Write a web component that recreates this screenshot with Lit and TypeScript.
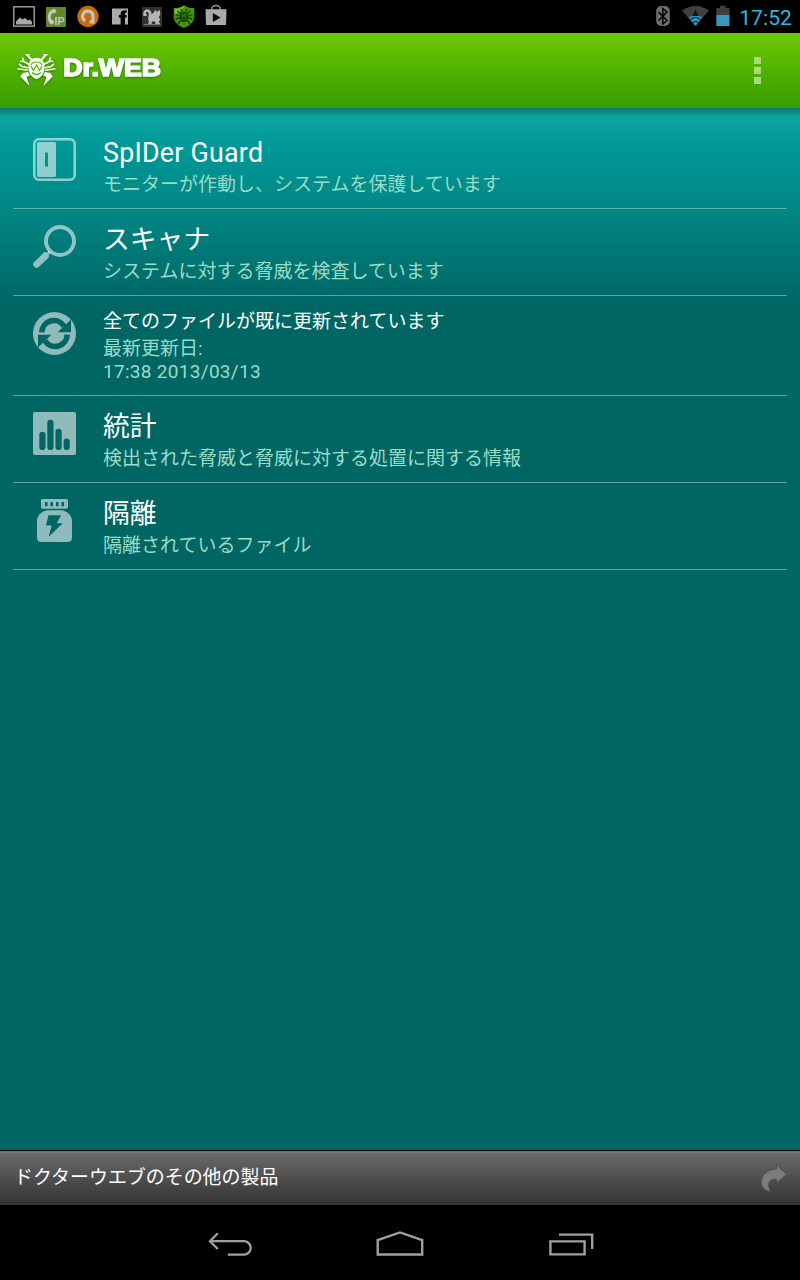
import { LitElement, html, css, svg } from "lit";
import { customElement } from "lit/decorators.js";

const statusIcons = [
  // gallery
  svg`<rect x="5.8" y="6.8" width="20.4" height="19.4" fill="none" stroke="#a0a0a0" stroke-width="1.4"/>
    <path d="M8 24.5V21.5L12 17.5L14.5 19.5L17 18L20 20.5L22 19.5L24 22V24.5Z" fill="#a8a8a8"/>`,
  // ip phone
  svg`<rect x="6" y="7" width="20" height="20" rx="1" fill="#62882a"/>
    <path d="M13.4 9.2C9 10.5 7.2 14.5 8 19C8.4 22 9.6 24.2 12 24.6L14.2 22.4L12.6 19.4L11.2 19.8C10.2 17 10.8 14.6 12.6 13L14.2 13.6L16.6 11.4L15 9Z" fill="#c4c8bd"/>
    <text x="14.6" y="25" class="ip" textLength="10" lengthAdjust="spacingAndGlyphs">IP</text>`,
  // avast
  svg`<circle cx="16" cy="16.5" r="10.7" fill="#c66b0b"/>
    <path d="M13.2 20.8A5.2 5.2 0 1 1 21 16.4V21.8H17.6" fill="none" stroke="#c9c2b8" stroke-width="3.2"/>`,
  // facebook
  svg`<path d="M8 8.5H24V24.5H20.9V17.6H22.6V15H20.9V13.8C20.9 12.9 21.3 12.7 22.6 12.7V10.2C18.4 9.8 16.6 11 16.6 13.8V15H14.8V17.6H16.6V24.5H8Z" fill="#ababab"/>`,
  // mascot
  svg`<rect x="6" y="7" width="20" height="20" fill="#303232"/>
    <path d="M7.3 16C6.8 11.5 9.2 9 12 9.4C14.6 9.8 15.8 12 15.6 14.5L18 12.2L19.2 9.7L20.7 11.8L23.8 10L24.4 14.6L22.8 17L24.2 19.5L22.5 22.8H24V24H19.5L19 21.5H15.7V24H12.2V22.7H13.2L12 19L13 15.5C13.2 12.7 12.3 11.5 10.6 12C9.3 12.6 9.8 14 11 14.3L10.5 16L8.8 16Z" fill="#b4b4b4"/>
    <path d="M8.6 12.5C9 10.3 12.5 9.8 13.8 12.6L13.6 16.5H16.5L18 19.2H22" fill="none" stroke="#b4b4b4" stroke-width="2"/>
    <path d="M8 24.5H24.5" stroke="#777" stroke-width="1"/>`,
  // shield
  svg`<path d="M16 5C13 7.5 9.5 8 5.7 8V17C6 22.5 10.5 25.8 16 28C21.5 25.8 26 22.5 26.3 17V8C22.5 8 19 7.5 16 5Z" fill="#449309"/>
    <path d="M16 6C13.5 8 10 9 6.7 9V15C10 12 15 10.5 16 6Z" fill="#83bd27"/>
    <g fill="none" stroke="#183d06" stroke-width="1.3"><ellipse cx="16" cy="17" rx="3.5" ry="4.5" fill="#286c08"/>
    <path d="M13 14L9.5 11M12 16L7.5 14.7M12 18L7.5 19M13 20L10 24M19 14L22.5 11M20 16L24.5 14.7M20 18L24.5 19M19 20L22 24M14 12L13 9M18 12L19 9M13 17L16 18.5L19 17M16 18.5V21"/></g>`,
  // store bag
  svg`<path d="M11.8 10V8.5A4.1 3 0 0 1 20.2 8.5V10" fill="none" stroke="#999" stroke-width="1.4"/>
    <path d="M5.5 9.3H26.5L26 25H6Z" fill="#a9a9a9"/><path d="M12.8 13L20.6 17.5L12.8 22Z" fill="#050505"/>`,
];

const guardIcon = svg`<rect x="1.3" y="1.3" width="40.4" height="40.4" rx="4.8" fill="none" stroke="currentColor" stroke-width="2.6"/>
  <path fill="currentColor" fill-rule="evenodd" d="M5.5 4H21.5Q23 4 23 5.5V37.5Q23 39 21.5 39H5.5Q4 39 4 37.5V5.5Q4 4 5.5 4ZM12 14.4V28.5H15V14.4Z"/>`;
const scanIcon = svg`<g fill="currentColor"><path fill-rule="evenodd" d="M27 0A16 16 0 1 1 26.99 0ZM27 3.9A12.1 12.1 0 1 0 27.01 3.9Z"/>
  <path d="M15.4 25.4L14.4 27.6L11.5 27L1 37.3Q-.6 39.4 1 41.6Q3.2 44 5.7 42L15.9 32.2L15.9 29.3L18.2 28Q16.6 27 15.4 25.4Z"/></g>`;
const updateIcon = svg`<defs><mask id="sync"><rect width="43" height="43" fill="#fff"/>
    <g fill="none" stroke="#000" stroke-width="5.6"><path d="M8.8 20.4A12 12 0 0 1 31 14.2"/><path d="M34.2 22.6A12 12 0 0 1 12 28.8"/></g>
    <path d="M38 7.5V20.2H24.6ZM5 35.5V22.8H18.4Z" fill="#000"/></mask></defs>
  <circle cx="21.5" cy="21.5" r="21.5" fill="currentColor" mask="url(#sync)"/>`;
const statsIcon = svg`<path fill="currentColor" fill-rule="evenodd" d="M2 0H41Q43 0 43 2V41Q43 43 41 43H2Q0 43 0 41V2Q0 0 2 0ZM6.3 22.8V35A3.1 3.1 0 0 0 12.5 35V22.8A3.1 3.1 0 0 0 6.3 22.8ZM14.3 10.8V35A3.1 3.1 0 0 0 20.5 35V10.8A3.1 3.1 0 0 0 14.3 10.8ZM22.5 19.8V35A3.1 3.1 0 0 0 28.7 35V19.8A3.1 3.1 0 0 0 22.5 19.8ZM30.6 29.5V35A3.1 3.1 0 0 0 36.8 35V29.5A3.1 3.1 0 0 0 30.6 29.5Z"/>`;
const jarIcon = svg`<path fill="currentColor" fill-rule="evenodd" d="M9.8 0H33.2Q35 0 35 1.8V8Q35 9.8 33.2 9.8H9.8Q8 9.8 8 8V1.8Q8 0 9.8 0ZM12 3V7.3H14.5V3ZM17.5 3V7.3H20V3ZM23 3V7.3H25.5V3ZM28.5 3V7.3H31V3Z"/>
  <path fill="currentColor" fill-rule="evenodd" d="M14 11.2H29C34.5 12.5 39 16.5 39 21.5V38.5Q39 43 34.5 43H8.5Q4 43 4 38.5V21.5C4 16.5 8.5 12.5 14 11.2ZM15.4 16.3L13 26.5H18.6L15.8 37.8L29.8 24.3H23.8L28 16.3Z"/>`;

interface Entry {
  icon: unknown;
  title: string;
  lines: string[];
  kind: string;
}

const entries: Entry[] = [
  { icon: guardIcon, title: "SpIDer Guard", lines: ["モニターが作動し、システムを保護しています"], kind: "latin" },
  { icon: scanIcon, title: "スキャナ", lines: ["システムに対する脅威を検査しています"], kind: "" },
  { icon: updateIcon, title: "全てのファイルが既に更新されています", lines: ["最新更新日:", "17:38 2013/03/13"], kind: "compact" },
  { icon: statsIcon, title: "統計", lines: ["検出された脅威と脅威に対する処置に関する情報"], kind: "" },
  { icon: jarIcon, title: "隔離", lines: ["隔離されているファイル"], kind: "" },
];

@customElement("app-root")
export class AppRoot extends LitElement {
  static styles = css`
    :host {
      display: flex;
      flex-direction: column;
      width: 800px;
      height: 1280px;
      overflow: hidden;
      background: #000;
      font-family: Roboto, "Noto Sans CJK JP", sans-serif;
    }
    svg { display: block; flex: none; }
    .status { display: flex; height: 33px; padding: 0 8px; background: #000; }
    .ip { font: bold 11.5px "Liberation Sans", sans-serif; fill: #c4c8bd; }
    .system { display: flex; margin-left: auto; }
    .clock {
      width: 54px; font-size: 21px; line-height: 36px; color: #33b5e5;
      white-space: nowrap; text-align: right; letter-spacing: 0.1px;
    }
    .bar {
      display: flex; align-items: center; justify-content: space-between;
      box-sizing: border-box; height: 75px; padding: 0 39px 0 14px;
      background: linear-gradient(#6dc700, #379d00);
    }
    .wordmark { font: bold 23.5px "Liberation Sans", sans-serif; fill: #fff; stroke: #fff; stroke-width: 1.5px; }
    .brand { filter: drop-shadow(0 1px 1px rgba(20, 80, 0, 0.55)); }
    .menu { display: grid; gap: 3px; }
    .dot { width: 7px; height: 7px; background: #a9da80; }
    .content {
      box-sizing: border-box; height: 1042px; padding: 14px 13px 0;
      background:
        linear-gradient(rgba(0, 70, 60, 0.45), rgba(0, 70, 60, 0) 9px) no-repeat,
        linear-gradient(#0ca69f 0, #0aa39d 14px, #009999 36px, #008583 107px, #006866 190px, #006664 205px);
    }
    .row {
      display: flex; box-sizing: border-box; height: 87px; padding: 0 0 0 20px;
      border-bottom: 1px solid rgba(157, 207, 191, 0.6);
    }
    .icon { width: 43px; height: 43px; margin: 16px 27px 0 0; color: rgba(255, 255, 255, 0.56); }
    .text { padding-top: 15px; white-space: nowrap; }
    .title { color: #fff; font-size: 26.8px; line-height: 33px; }
    .line { color: #9adcc6; font-size: 19px; line-height: 30px; }
    .latin .title { letter-spacing: 0.25px; }
    .compact { height: 100px; }
    .compact .text { padding-top: 14px; }
    .compact .title { font-size: 19px; line-height: 24px; }
    .compact .line { line-height: 23px; }
    .compact .line:last-child { letter-spacing: 0.3px; }
    .compact .title + .line { margin-top: 3px; }
    .promo {
      display: flex; justify-content: space-between; box-sizing: border-box; height: 55px;
      padding: 0 12px 0 14px; border-top: 1px solid #000; color: #fff;
      font-size: 18.95px; line-height: 53px;
      background: linear-gradient(#5a5a5a 0, #858585 1px, #696969 2px, #333 100%);
    }
    .nav { display: flex; flex: 1; gap: 122px; padding: 24px 0 0 207px; box-sizing: border-box; }
  `;

  private row(e: Entry) {
    return html`<div class="row ${e.kind}">
      <svg class="icon" viewBox="0 0 43 43">${e.icon}</svg>
      <div class="text">
        <div class="title">${e.title}</div>
        ${e.lines.map((l) => html`<div class="line">${l}</div>`)}
      </div>
    </div>`;
  }

  render() {
    return html`
      <div class="status">
        ${statusIcons.map((i) => html`<svg width="32" height="33" viewBox="0 0 32 33">${i}</svg>`)}
        <div class="system">
          <svg width="86" height="33" viewBox="652 0 86 33">
            <rect x="656.2" y="6" width="13.6" height="20" rx="5" fill="#6e6e6e"/>
            <path d="M658.5 12L667 20.5L662.8 24V8.5L667 12L658.5 20.5" fill="none" stroke="#000" stroke-width="1.5"/>
            <path d="M682 10.5Q695.5 1.5 709 10.5L695.5 26Z" fill="#404040"/>
            <path d="M688.5 17.3Q695.5 13.5 702.5 17.3L695.5 26Z" fill="#2f94bd"/>
            <path d="M695.5 9.5L698.6 16H692.4Z" fill="#151515"/>
            <path d="M690.5 19.5Q695.5 15.6 700.5 19.5M692.8 22.6Q695.5 20.4 698.2 22.6" fill="none" stroke="#0a2530" stroke-width="1.1"/>
            <path d="M716.3 8H719.8V5.7H725.7V8H729.5V15H716.3Z" fill="#3e3e3e"/>
            <path d="M716.3 15H729.5V26H716.3Z" fill="#3698c0"/>
          </svg>
          <div class="clock">17:52</div>
        </div>
      </div>

      <div class="bar">
        <svg class="brand" width="150" height="75" viewBox="14 33 150 75">
          <path d="M29.5 64.5L23.5 61.5L20 61.2M24 61.5L22.4 57.5M28 67.8L22 66.5L19 63.8M28 70.2L17.5 68.8M43.5 64.5L49.5 61.5L53 61.2M49 61.5L50.6 57.5M45 67.8L51 66.5L54 63.8M45 70.2L55.5 68.8" fill="none" stroke="#fff" stroke-width="1.6"/>
          <path d="M28 72L22.8 73L20.3 76.5L29.6 86L26.6 77.5L28 76L30 75.5ZM45 72L50.2 73L52.7 76.5L43.4 86L46.4 77.5L45 76L43 75.5Z" fill="#fff"/>
          <path d="M24.7 54H30.5L29 55.4L32.7 59.2L31 61L27.2 56.5ZM48.3 54H42.5L44 55.4L40.3 59.2L42 61L45.8 56.5Z" fill="#fff"/>
          <path d="M36.5 57.8C42 58 44.6 62 44.6 67C44.6 72.5 42 77 36.5 79.2C31 77 28.4 72.5 28.4 67C28.4 62 31 58 36.5 57.8Z" fill="#fff"/>
          <path d="M31 65Q32 62 36.5 62Q41 62 42 65M31 66L33.4 70.5L36.5 65L39.6 70.5L42 66M32 72.5Q36.5 76.5 41 72.5" fill="none" stroke="#58b700" stroke-width="1.2"/>
          <text class="wordmark" x="63.2" y="76.2" textLength="98" lengthAdjust="spacingAndGlyphs">Dr.WEB</text>
        </svg>
        <div class="menu"><div class="dot"></div><div class="dot"></div><div class="dot"></div></div>
      </div>

      <div class="content">${entries.map((e) => this.row(e))}</div>

      <div class="promo">
        <span>ドクターウエブのその他の製品</span>
        <svg width="28" height="54" viewBox="760 1151 28 54">
          <path d="M776.5 1165L786.5 1174.3L776.5 1183V1179.3C769.5 1178.5 766.5 1183 770.5 1191.8C764 1191 761 1186 761.5 1181.5C762 1174 768 1169.5 776.5 1169Z" fill="#7c7c7c" stroke="#4a4a4a" stroke-width=".8"/>
        </svg>
      </div>

      <div class="nav">
        <svg width="46" height="32" viewBox="207 1229 46 32" fill="none" stroke="#a0a0a0" stroke-width="2.3">
          <path d="M217.8 1233.3L210 1241.2L217.8 1249M210 1241.2H244A6.6 6.6 0 0 1 244 1254.6H227.8"/>
        </svg>
        <svg width="50" height="32" viewBox="375 1229 50 32" fill="none" stroke="#a0a0a0" stroke-width="2.4">
          <path d="M377.7 1254.5V1240L400 1232.4L422.2 1240V1254.5Z"/>
        </svg>
        <svg width="47" height="32" viewBox="547 1229 47 32" fill="none" stroke="#a0a0a0" stroke-width="2.4">
          <path d="M550.4 1241.4H584.6V1254.4H550.4ZM559 1234.6H592.2V1249"/>
        </svg>
      </div>`;
  }
}
